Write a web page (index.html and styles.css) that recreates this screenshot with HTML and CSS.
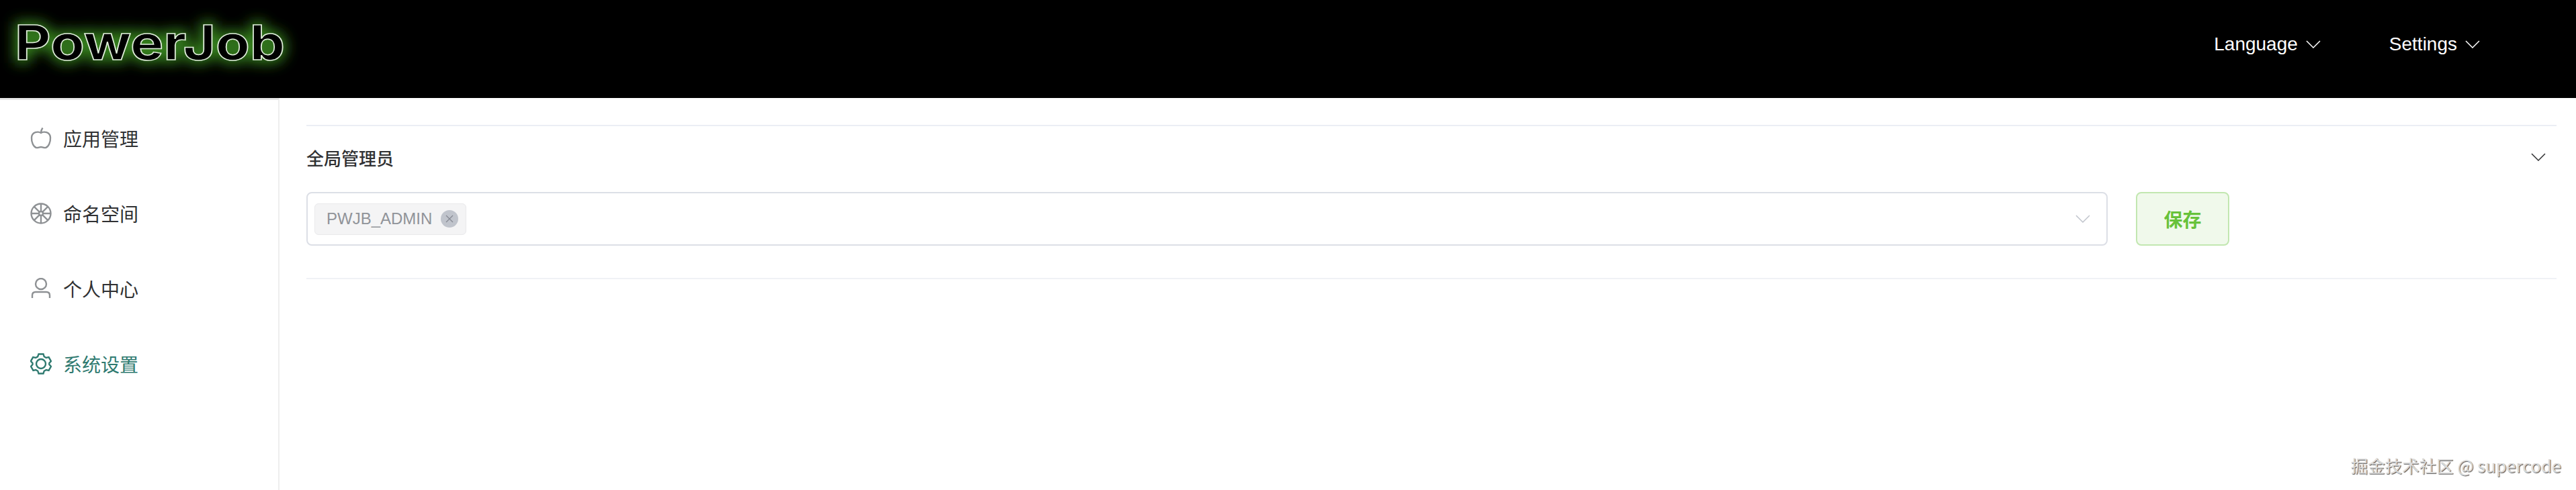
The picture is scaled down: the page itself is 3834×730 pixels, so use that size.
FILE: index.html

```html
<!DOCTYPE html>
<html>
<head>
    <meta charset="UTF-8">
    <title>PowerJob</title>
    <link rel="stylesheet" href="styles.css">
</head>
<body>
<div class="header">
    <svg class="logo" width="460" height="146" viewBox="0 0 460 146">
        <defs>
            <filter id="glow" x="-15%" y="-60%" width="130%" height="220%">
                <feGaussianBlur stdDeviation="10"/>
            </filter>
        </defs>
        <text class="logo-glow" x="22" y="89" textLength="402" lengthAdjust="spacingAndGlyphs" filter="url(#glow)">PowerJob</text>
        <text class="logo-text" x="22" y="89" textLength="402" lengthAdjust="spacingAndGlyphs">PowerJob</text>
    </svg>
    <div class="nav">
        <div class="nav-item">
            <span>Language</span>
            <svg class="chev" width="22" height="12" viewBox="0 0 22 12"><path d="M1 1l10 10L21 1"/></svg>
        </div>
        <div class="nav-item">
            <span>Settings</span>
            <svg class="chev" width="22" height="12" viewBox="0 0 22 12"><path d="M1 1l10 10L21 1"/></svg>
        </div>
    </div>
</div>
<div class="main">
    <div class="aside">
        <div class="menu-item">
            <svg class="icon" width="32" height="32" viewBox="0 0 32 32">
                <path d="M16 8C12 5.500 2.500 6 2 15c-.4 7 3 14 7 15 2.500.5 4.500-1 7-1s4.500 1.500 7 1c4-1 7.400-8 7-15-.5-9-10-9.500-14-7z"/>
                <path d="M16 8c0-3 1-5.500 2.500-7.500"/>
            </svg>
            <span>应用管理</span>
        </div>
        <div class="menu-item">
            <svg class="icon" width="32" height="32" viewBox="0 0 32 32">
                <circle cx="16" cy="16" r="14.500"/>
                <circle cx="16" cy="16" r="3"/>
                <path d="M16 1.500V13M16 19v11.500M1.500 16H13M19 16h11.500M5.800 5.800l8 8M18.200 18.200l8 8M26.200 5.800l-8 8M13.800 18.200l-8 8"/>
            </svg>
            <span>命名空间</span>
        </div>
        <div class="menu-item">
            <svg class="icon" width="32" height="32" viewBox="0 0 32 32">
                <circle cx="16" cy="9" r="8"/>
                <path d="M3 30v-4c0-3 2-5 5-5h16c3 0 5 2 5 5v4"/>
            </svg>
            <span>个人中心</span>
        </div>
        <div class="menu-item active">
            <svg class="icon" width="32" height="32" viewBox="0 0 32 32">
                <circle cx="16" cy="16" r="7"/>
                <path d="M12.500 1.500h7l1.200 3.800 3 1.700 3.900-.9 3.400 6-2.700 2.900v2l2.700 2.900-3.400 6-3.900-.9-3 1.700-1.200 3.800h-7l-1.200-3.800-3-1.700-3.900.9-3.400-6L3.500 17v-2L.8 12.100l3.400-6 3.900.9 3-1.700z"/>
            </svg>
            <span>系统设置</span>
        </div>
    </div>
    <div class="content">
        <div class="collapse">
            <div class="collapse-head">
                <span>全局管理员</span>
                <svg class="chev dark" width="22" height="12" viewBox="0 0 22 12"><path d="M1 1l10 10L21 1"/></svg>
            </div>
            <div class="collapse-body">
                <div class="select">
                    <div class="tag">
                        <span>PWJB_ADMIN</span>
                        <span class="tag-close">
                            <svg width="12" height="12" viewBox="0 0 12 12"><path d="M1 1l10 10M11 1L1 11"/></svg>
                        </span>
                    </div>
                    <svg class="chev light" width="22" height="12" viewBox="0 0 22 12"><path d="M1 1l10 10L21 1"/></svg>
                </div>
                <button class="save">保存</button>
            </div>
        </div>
    </div>
</div>
<div class="watermark">掘金技术社区 @ supercode</div>
</body>
</html>
```

FILE: styles.css

```css
body {
    margin: 0;
    height: 730px;
    overflow: hidden;
    background-color: #fff;
    font-family: "Liberation Sans", "Noto Sans CJK SC", sans-serif;
    color: #303133;
}
.header {
    height: 146px;
    background-color: #000;
    display: flex;
    justify-content: space-between;
    align-items: center;
}
.logo {
    display: block;
}
.logo text {
    font: bold 71px Inter, sans-serif;
}
.logo-glow {
    fill: #347f1d;
    stroke: #347f1d;
    stroke-width: 10px;
}
.logo-text {
    fill: #000;
    stroke: #dfeeda;
    stroke-width: 1.500px;
}
.nav {
    display: flex;
    gap: 102px;
    padding: 0 143px 14px 0;
}
.nav-item {
    display: flex;
    align-items: center;
    gap: 12px;
    color: #fff;
    font-size: 28px;
}
.chev {
    display: block;
    fill: none;
    stroke: #fff;
    stroke-width: 1.500px;
}
.chev.dark {
    stroke: #303133;
}
.chev.light {
    stroke: #c0c4cc;
}
.main {
    display: flex;
    height: 584px;
}
.aside {
    width: 414px;
    border-top: 3px solid #e6e6e6;
    border-right: 2px solid #eeeeee;
    padding-top: 1px;
    flex-shrink: 0;
}
.menu-item {
    height: 112px;
    display: flex;
    align-items: center;
    gap: 17px;
    padding-left: 45px;
    font-size: 28px;
    font-family: "Noto Sans CJK SC", sans-serif;
}
.icon {
    display: block;
    fill: none;
    stroke: #8e9194;
    stroke-width: 2.400px;
}
.menu-item.active {
    color: #2f7a70;
}
.menu-item.active .icon {
    stroke: #2f7a70;
}
.content {
    flex: 1;
    padding: 40px 29px 0 40px;
}
.collapse {
    border-top: 2px solid #ebeef5;
    border-bottom: 2px solid #f0f2f5;
}
.collapse-head {
    height: 92px;
    display: flex;
    justify-content: space-between;
    align-items: center;
    padding-right: 16px;
    font-family: "Noto Sans CJK SC", sans-serif;
    font-size: 26px;
    font-weight: 500;
}
.collapse-body {
    display: flex;
    gap: 42px;
    padding: 6px 487px 48px 0;
}
.select {
    flex: 1;
    height: 80px;
    box-sizing: border-box;
    border: 2px solid #dcdfe6;
    border-radius: 8px;
    display: flex;
    justify-content: space-between;
    align-items: center;
    padding: 0 24px 0 10px;
}
.tag {
    height: 47px;
    box-sizing: border-box;
    display: flex;
    align-items: center;
    gap: 13px;
    padding: 0 11px 0 17px;
    background-color: #f4f4f5;
    border: 1px solid #e9e9eb;
    border-radius: 6px;
    color: #909399;
    font-size: 24px;
}
.tag-close {
    width: 26px;
    height: 26px;
    border-radius: 50%;
    background-color: #c0c4cc;
    display: flex;
    align-items: center;
    justify-content: center;
}
.tag-close svg {
    display: block;
    fill: none;
    stroke: #868a94;
    stroke-width: 1.300px;
}
.save {
    width: 139px;
    height: 80px;
    background-color: #f0f9eb;
    border: 2px solid #c2e7b0;
    border-radius: 8px;
    color: #67c23a;
    font-family: "Noto Sans CJK SC", sans-serif;
    font-size: 28px;
    font-weight: 700;
    padding: 0;
}
.watermark {
    position: absolute;
    right: 22px;
    top: 675px;
    color: #dcdcdc;
    font-family: "Noto Sans CJK SC", sans-serif;
    font-size: 25.500px;
    line-height: 36px;
    text-shadow: 1px 1px 1px #555;
}
```
